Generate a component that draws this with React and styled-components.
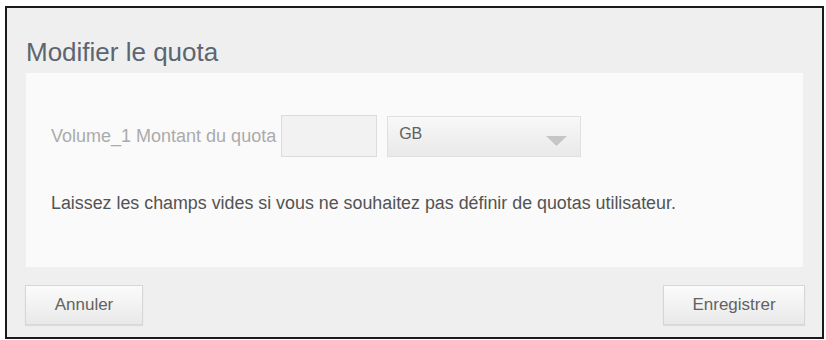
import React from "react";
import styled, { createGlobalStyle } from "styled-components";

const GlobalStyle = createGlobalStyle`
  html, body {
    margin: 0;
    padding: 0;
    background: #ffffff;
    font-family: "Liberation Sans", Arial, sans-serif;
  }
`;

const Page = styled.div`
  padding: 6px 2px 0 5px;
`;

const Dialog = styled.div`
  width: 815px;
  border: 2px solid #1a1a1a;
  background: #efefef;
  padding: 29px 0 12px;
  display: flex;
  flex-direction: column;
`;

const Title = styled.h2`
  margin: 0 19px 6px;
  font-size: 26px;
  line-height: 30px;
  font-weight: normal;
  color: #5c6570;
`;

const Panel = styled.div`
  margin: 0 19px;
  background: #fafafa;
  padding: 42px 25px 54px;
  display: flex;
  flex-direction: column;
  gap: 36px;
`;

const Row = styled.div`
  display: flex;
  align-items: center;
`;

const Label = styled.span`
  font-size: 18px;
  color: #ababab;
  margin-right: 5px;
`;

const Input = styled.div`
  box-sizing: border-box;
  width: 96px;
  height: 42px;
  border: 1px solid #dcdcdc;
  background: #f2f2f2;
  margin-right: 10px;
`;

const Select = styled.div`
  box-sizing: border-box;
  width: 194px;
  height: 41px;
  border: 1px solid #e0e0e0;
  background: linear-gradient(#f8f8f8, #e9e9e9);
  display: flex;
  align-items: center;
  justify-content: space-between;
  padding: 0 13px 4px 11px;
  font-size: 16px;
  color: #606060;
`;

const Arrow = styled.svg`
  width: 21px;
  height: 10px;
  margin-top: 14px;
`;

const Help = styled.p`
  margin: 0;
  font-size: 17.85px;
  line-height: 20px;
  color: #535353;
`;

const Footer = styled.div`
  display: flex;
  justify-content: space-between;
  padding: 0 17px 0 18px;
  margin-top: 18px;
`;

const Button = styled.button`
  box-sizing: border-box;
  width: ${(p) => p.$w}px;
  height: 40px;
  border: 1px solid #d6d6d6;
  background: linear-gradient(#fbfbfb, #e9e9e9);
  box-shadow: 0 1px 1px rgba(0, 0, 0, 0.08);
  font-family: "Liberation Sans", Arial, sans-serif;
  font-size: 17px;
  color: #626262;
  padding: 0;
`;

export default function App() {
  return (
    <>
      <GlobalStyle />
      <Page>
        <Dialog>
          <Title>Modifier le quota</Title>
          <Panel>
            <Row>
              <Label>Volume_1 Montant du quota</Label>
              <Input />
              <Select>
                <span>GB</span>
                <Arrow viewBox="0 0 21 10">
                  <path d="M0 0 H21 L10.5 10 Z" fill="#c6c6c6" />
                </Arrow>
              </Select>
            </Row>
            <Help>
              Laissez les champs vides si vous ne souhaitez pas définir de
              quotas utilisateur.
            </Help>
          </Panel>
          <Footer>
            <Button $w={118}>Annuler</Button>
            <Button $w={142}>Enregistrer</Button>
          </Footer>
        </Dialog>
      </Page>
    </>
  );
}
